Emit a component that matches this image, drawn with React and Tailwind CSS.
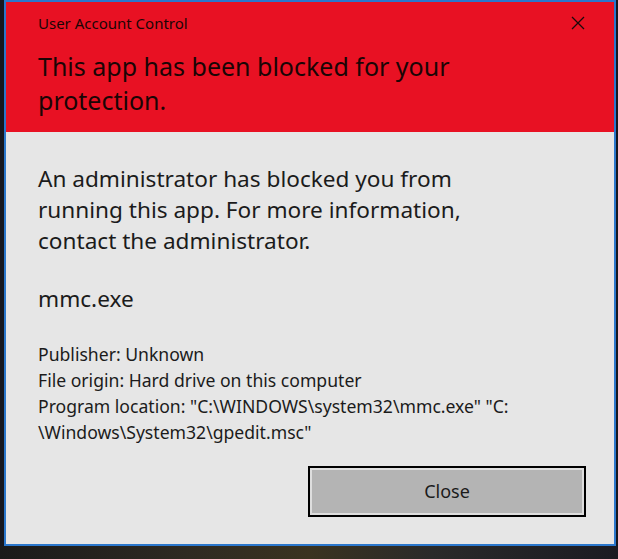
const font = { fontFamily: '"Noto Sans", "Open Sans", sans-serif' }

function CloseGlyph() {
  return (
    <svg width="14" height="14" viewBox="0 0 14 14" className="block">
      <path d="M1 1 L13 13 M13 1 L1 13" stroke="#1a0a0a" strokeWidth="1.3" fill="none" />
    </svg>
  )
}

export default function App() {
  return (
    <div
      className="w-[618px] h-[559px] bg-[#16171f] flex flex-col overflow-hidden"
      style={font}
    >
      <div className="flex pl-[4px]">
        <div className="w-[612px] h-[546px] border-2 border-[#2b77cc] flex flex-col bg-[#e6e6e6]">
          <header className="h-[130px] bg-[#e81123] pl-[32px] pr-[29px] pt-[11px] shrink-0">
            <div className="flex items-center justify-between h-[20px]">
              <span className="text-[15px] leading-[20px] text-[#1a0505]">User Account Control</span>
              <CloseGlyph />
            </div>
            <h1 className="mt-[16px] text-[25px] leading-[34px] text-[#1a0505] w-[440px]">
              This app has been blocked for your protection.
            </h1>
          </header>

          <div className="flex-1 flex flex-col pl-[32px] pr-[28px] pt-[31px] text-[#1b1b1b]">
            <p className="text-[22.6px] leading-[31px] w-[440px]">
              An administrator has blocked you from running this app. For more information, contact the administrator.
            </p>
            <p className="mt-[27px] text-[22.6px] leading-[31px]">mmc.exe</p>
            <div className="mt-[27px] text-[17.6px] leading-[26px]">
              <p>Publisher: Unknown</p>
              <p>File origin: Hard drive on this computer</p>
              <p>
                <span className="block">Program location: "C:\WINDOWS\system32\mmc.exe" "C:</span>
                <span className="block">\Windows\System32\gpedit.msc"</span>
              </p>
            </div>
            <div className="flex justify-end mt-[21px]">
              <button className="w-[278px] h-[51px] border-2 border-black bg-[#b4b4b4] ring-2 ring-inset ring-[#dedede] text-[18px] text-[#1b1b1b]">
                Close
              </button>
            </div>
          </div>
        </div>
      </div>
      <div className="flex-1 bg-[linear-gradient(90deg,#1a1a1a,#2e2a22_30%,#3a3320_50%,#2a2a2a_70%,#1b1b22)]" />
    </div>
  )
}
